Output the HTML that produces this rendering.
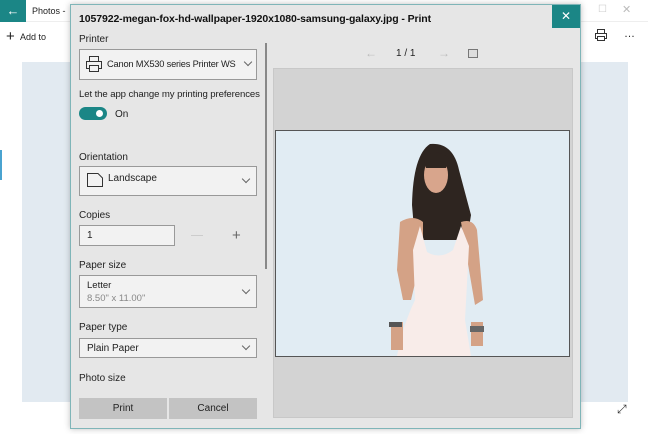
<!DOCTYPE html>
<html><head><style>
*{margin:0;padding:0;box-sizing:border-box}
body{width:648px;height:434px;overflow:hidden;background:#fff;font-family:"Liberation Sans",sans-serif;position:relative;font-size:10px;color:#222}
.abs{position:absolute}
.lbl{position:absolute;left:79px;font-size:10px;color:#222}
.box{position:absolute;left:79px;width:178px;background:#f2f2f2;border:1.5px solid #999}
.chev{position:absolute;right:7px;width:6px;height:6px;border-right:1px solid #666;border-bottom:1px solid #666;transform:rotate(45deg)}
</style></head><body>
<div class="abs" style="left:0;top:0;width:26px;height:22px;background:#1b8686;color:#fff;font-size:13px;text-align:center;line-height:21px">&#8592;</div>
<div class="abs" style="left:26px;top:0;width:622px;height:22px;background:#fff;border-bottom:1px solid #eee"></div>
<div class="abs" style="left:32px;top:6px;font-size:9px">Photos -</div>
<div class="abs" style="left:598px;top:4px;color:#ccc;font-size:10px">☐</div>
<div class="abs" style="left:622px;top:3px;color:#bbb;font-size:11px">✕</div>
<div class="abs" style="left:6px;top:28px;font-size:15px;font-weight:300">+</div>
<div class="abs" style="left:20px;top:32px;font-size:9px">Add to</div>
<svg class="abs" style="left:594px;top:28px" width="14" height="14"><rect x="3.5" y="1.5" width="7" height="4" fill="none" stroke="#333"/><rect x="1.5" y="5.5" width="11" height="5" fill="none" stroke="#333"/><rect x="3.5" y="8.5" width="7" height="4" fill="#fff" stroke="#333"/></svg>
<div class="abs" style="left:624px;top:28px;font-size:11px">…</div>
<div class="abs" style="left:22px;top:62px;width:606px;height:340px;background:#e2eaf1"></div>
<div class="abs" style="left:617px;top:402px;font-size:12px;color:#333">⤢</div>
<div class="abs" style="left:0;top:150px;width:2px;height:30px;background:#4aa3d0"></div>
<div class="abs" style="left:70px;top:4px;width:511px;height:425px;background:#e6e6e6;border:1px solid #7fb5b8;box-shadow:0 0 6px rgba(0,0,0,.25)"></div>
<div class="abs" style="left:552px;top:5px;width:28px;height:23px;background:#1b8686;color:#fff;text-align:center;line-height:22px;font-size:12px">✕</div>
<div class="abs" style="left:79px;top:13px;font-size:10.5px;font-weight:bold;color:#111;letter-spacing:-0.1px">1057922-megan-fox-hd-wallpaper-1920x1080-samsung-galaxy.jpg - Print</div>
<div class="lbl" style="top:34px">Printer</div>
<div class="box" style="top:49px;height:31px">
<svg class="abs" style="left:5px;top:5px" width="18" height="18"><rect x="4.5" y="1.5" width="9" height="5" fill="none" stroke="#333"/><rect x="1.5" y="6.5" width="15" height="7" fill="none" stroke="#333"/><rect x="4.5" y="10.5" width="9" height="6" fill="#f2f2f2" stroke="#333"/></svg>
<span class="abs" style="left:27px;top:9px;font-size:9.3px;letter-spacing:-0.2px">Canon MX530 series Printer WS</span><div class="chev" style="top:9px;right:5px"></div></div>
<div class="lbl" style="top:89px;font-size:9.6px;letter-spacing:-0.1px">Let the app change my printing preferences</div>
<div class="abs" style="left:79px;top:107px;width:28px;height:13px;border-radius:7px;background:#1b8686"></div>
<div class="abs" style="left:96px;top:110px;width:7px;height:7px;border-radius:50%;background:#fff"></div>
<div class="abs" style="left:115px;top:109px;font-size:10px">On</div>
<div class="lbl" style="top:152px">Orientation</div>
<div class="box" style="top:166px;height:30px">
<svg class="abs" style="left:6px;top:5px" width="18" height="16"><path d="M1.5 1.5H12L16.5 6V14.5H1.5Z" fill="none" stroke="#333"/></svg>
<span class="abs" style="left:28px;top:6px">Landscape</span><div class="chev" style="top:9px"></div></div>
<div class="lbl" style="top:210px">Copies</div>
<div class="box" style="top:225px;width:96px;height:21px"><span class="abs" style="left:7px;top:4px">1</span></div>
<div class="abs" style="left:191px;top:235px;width:12px;height:1px;background:#ccc"></div>
<div class="abs" style="left:232px;top:227px;font-size:15px;color:#666">+</div>
<div class="lbl" style="top:260px">Paper size</div>
<div class="box" style="top:275px;height:33px"><span class="abs" style="left:7px;top:4px;font-size:9.5px">Letter</span><span class="abs" style="left:7px;top:17px;font-size:9.5px;color:#888">8.50" x 11.00"</span><div class="chev" style="top:11px"></div></div>
<div class="lbl" style="top:322px">Paper type</div>
<div class="box" style="top:338px;height:20px"><span class="abs" style="left:7px;top:4px">Plain Paper</span><div class="chev" style="top:4px"></div></div>
<div class="lbl" style="top:373px">Photo size</div>
<div class="abs" style="left:79px;top:398px;width:88px;height:21px;background:#c3c3c3;text-align:center;line-height:21px;font-size:10px">Print</div>
<div class="abs" style="left:169px;top:398px;width:88px;height:21px;background:#c3c3c3;text-align:center;line-height:21px;font-size:10px">Cancel</div>
<div class="abs" style="left:265px;top:43px;width:2px;height:226px;background:#888"></div>
<div class="abs" style="left:365px;top:46px;color:#bbb;font-size:12px">&#8592;</div>
<div class="abs" style="left:396px;top:48px;font-size:10px">1 / 1</div>
<div class="abs" style="left:438px;top:46px;color:#bbb;font-size:12px">&#8594;</div>
<div class="abs" style="left:468px;top:49px;width:10px;height:9px;border:1px solid #777;background:#ddd"></div>
<div class="abs" style="left:273px;top:68px;width:300px;height:350px;background:#d3d3d3;border:1px solid #c8c8c8"></div>
<svg class="abs" style="left:275px;top:130px" width="296" height="228">
<rect x="0.5" y="0.5" width="294" height="226" fill="#e1ecf3" stroke="#555"/>
<path d="M137 75 Q138 25 155 14 Q178 12 184 40 L196 85 L192 110 L140 110 Z" fill="#2e2520"/>
<ellipse cx="161" cy="45" rx="12" ry="18" fill="#d8a58c"/>
<path d="M149 28 Q160 17 174 28 L171 38 L151 38Z" fill="#2e2520"/>
<path d="M125 92 Q138 84 148 92 L148 120 L136 170 L128 170 L122 140Z" fill="#d4a286"/>
<path d="M186 92 Q198 88 202 100 L208 170 L200 175 L194 140Z" fill="#d4a286"/>
<path d="M145 96 L152 122 Q165 130 178 120 L186 96 L194 116 L190 190 L196 226 L122 226 Q128 195 140 170 L138 120Z" fill="#f8ece9"/>
<rect x="116" y="192" width="12" height="28" fill="#d4a286"/>
<rect x="196" y="192" width="12" height="24" fill="#d4a286"/>
<rect x="114" y="192" width="13" height="5" fill="#555"/>
<rect x="195" y="196" width="14" height="6" fill="#666"/>
</svg>
</body></html>
